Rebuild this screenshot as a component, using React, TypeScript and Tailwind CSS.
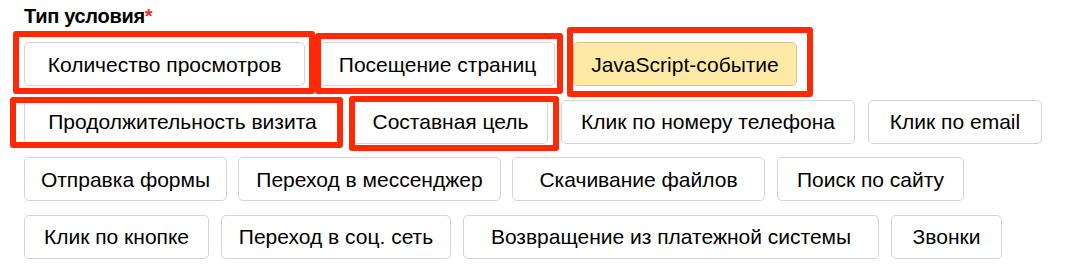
import React from 'react';

type Option = {
  label: string;
  width: string;
  active?: boolean;
  extra?: string;
  // red annotation frame around the button, as insets in px
  mark?: string;
};

const options: Option[] = [
  { label: 'Количество просмотров', width: 'w-[281px]', mark: '-top-[11px] -left-[11px] -right-[10px] -bottom-[8px]' },
  { label: 'Посещение страниц', width: 'w-[235px]', extra: 'ml-[3px]', mark: '-top-[9px] -left-[5px] -right-[8px] -bottom-[8px]' },
  { label: 'JavaScript-событие', width: 'w-[224px]', extra: 'ml-[6px]', active: true, mark: '-top-[15px] -left-[6px] -right-[16px] -bottom-[11px]' },
  { label: 'Продолжительность визита', width: 'w-[317px]', mark: '-top-[3px] -left-[14px] -right-[2px] -bottom-[4px]' },
  { label: 'Составная цель', width: 'w-[195px]', mark: '-top-[4px] -left-[4px] -right-[11px] -bottom-[7px]' },
  { label: 'Клик по номеру телефона', width: 'w-[294px]', extra: 'ml-[1px]' },
  { label: 'Клик по email', width: 'w-[174px]', extra: 'ml-[1px]' },
  { label: 'Отправка формы', width: 'w-[203px]' },
  { label: 'Переход в мессенджер', width: 'w-[263px]', extra: '-ml-[1px]' },
  { label: 'Скачивание файлов', width: 'w-[253px]', extra: '-ml-[1px]' },
  { label: 'Поиск по сайту', width: 'w-[187px]' },
  { label: 'Клик по кнопке', width: 'w-[185px]' },
  { label: 'Переход в соц. сеть', width: 'w-[230px]' },
  { label: 'Возвращение из платежной системы', width: 'w-[416px]' },
  { label: 'Звонки', width: 'w-[111px]' },
];

function OptionButton({ option }: { option: Option }) {
  const base =
    'h-[44px] px-2 rounded-[5px] border text-[21px] leading-none text-black whitespace-nowrap text-center';
  const look = option.active
    ? 'bg-[#feeaa6] border-[#dcc57e]'
    : 'bg-white border-[#d4d4d4]';

  return (
    <span className={`relative inline-flex ${option.extra ?? ''}`}>
      <button type="button" className={`${base} ${option.width} ${look}`}>
        {option.label}
      </button>
      {option.mark && (
        <span
          className={`pointer-events-none absolute ${option.mark} rounded-[3px] border-[6px] border-[#ff2a05]`}
        />
      )}
    </span>
  );
}

export default function App() {
  return (
    <div className="w-[1069px] h-[280px] bg-white px-6 pt-[5px] font-['Liberation_Sans',Arial,sans-serif]">
      <div className="text-[20px] font-bold leading-[22px] text-black tracking-[-0.3px]">
        Тип условия<span className="text-[#f52a1d]">*</span>
      </div>
      <div className="mt-[15px] flex flex-wrap gap-x-3 gap-y-[13.5px]">
        {options.map((o) => (
          <OptionButton key={o.label} option={o} />
        ))}
      </div>
    </div>
  );
}
